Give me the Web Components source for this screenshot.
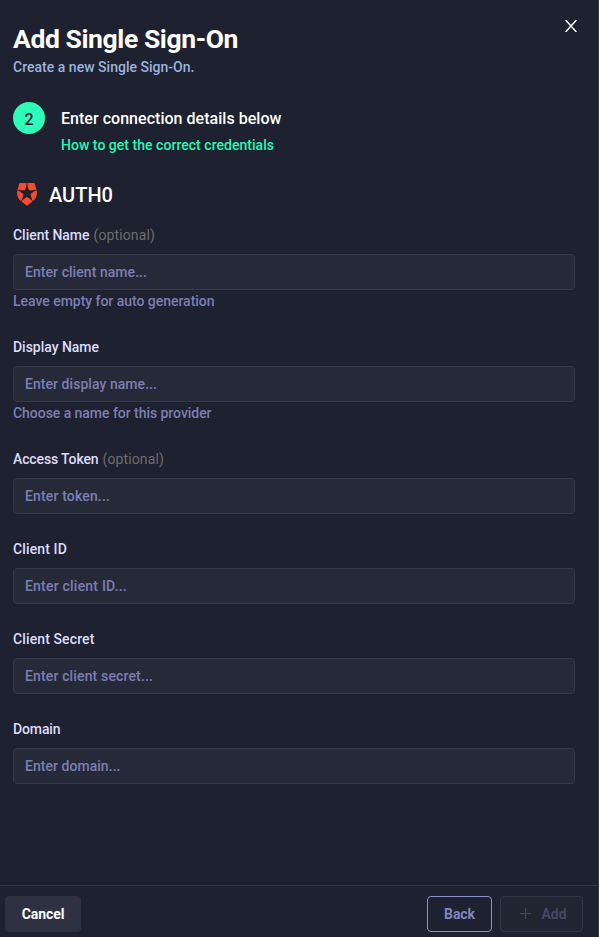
<!DOCTYPE html>
<html lang="en"><head><meta charset="utf-8"><title>Add Single Sign-On</title>
<style>html,body{margin:0;height:100%;background:#1e212f}body{font-family:Roboto,"Liberation Sans",sans-serif;overflow:hidden}</style></head>
<body><sso-panel></sso-panel>
<script>
const define=(name,html,after)=>customElements.define(name,class extends HTMLElement{
  connectedCallback(){
    if(this.shadowRoot)return;
    this.attachShadow({mode:'open'}).innerHTML=typeof html==='function'?html(this):html;
    if(after)after(this);
  }
});
// A single line of text tracked to fill the given width.
define('ui-text',`<style>:host{display:inline-block;white-space:pre}span{display:inline-block}</style><span></span>`,el=>{
  const s=el.shadowRoot.querySelector('span');
  s.textContent=el.getAttribute('text');
  const w=+el.getAttribute('w');
  if(w)s.style.letterSpacing=((w-s.getBoundingClientRect().width)/s.textContent.length).toFixed(3)+'px';
});
define('auth-logo',`<style>:host{display:block;width:20px;height:23px;padding-top:1px}svg{display:block}</style>
<svg width="20" height="23" viewBox="0 0 20 23"><path fill="#f64c2b" d="M2.6 0H17.4L19.5 6.6C20.8 11 19.3 15.9 15.6 18.6L10 22.7 4.4 18.6C.7 15.9-.8 11 .5 6.6Z"/><path fill="#1e212f" d="M10 1.2 12 7.2H18.6L13.4 11.2 15.4 17.7 10 13.8 4.6 17.7 6.6 11.2 1.4 7.2H8Z"/><path stroke="#1e212f" stroke-width=".8" d="M10 0V3M20 7.2H17M0 7.2H3M15 17 16 19M5 17 4 19"/></svg>`);
define('form-field',el=>{const a=n=>el.getAttribute(n);return `<style>
:host{display:block;height:${a('hint')?112:90}px;font-size:14px;line-height:20px;font-weight:500}
.label{display:flex;gap:4px;height:29px;color:#dcdcfb}
.opt{color:#6d6d6d;font-weight:400}
.box{box-sizing:border-box;height:36px;border:1px solid #353847;border-radius:4px;background:#262937;padding:7px 11px;color:#7a7fb4}
.hint{color:#7a7fb4;margin-top:1px}</style>
<div class="label"><ui-text text="${a('label')}" w="${a('lw')}"></ui-text>${a('optional')!==null?'<ui-text class="opt" text="(optional)" w="61.5"></ui-text>':''}</div>
<div class="box"><ui-text text="${a('placeholder')}" w="${a('pw')}"></ui-text></div>
${a('hint')?`<div class="hint"><ui-text text="${a('hint')}" w="${a('hw')}"></ui-text></div>`:''}`});
define('ui-button',`<style>:host{display:flex;box-sizing:border-box;height:36px;border-radius:4px;align-items:center;justify-content:center;border:1px solid transparent;font-size:14px;font-weight:700;line-height:20px}
:host([kind=cancel]){width:76px;background:#2e3141;color:#fff}
:host([kind=back]){width:65px;border-color:#8a8fc8;color:#8186bd}
:host([kind=add]){width:83px;border-color:#333645;background:#212431;color:#464867;gap:10px;padding-left:3px}</style><slot></slot>`);
define('panel-header',`<style>:host{display:flex;justify-content:space-between;height:102px;padding:0 21px 0 13px;box-sizing:border-box}
h1{margin:23px 0 0;font-size:26.5px;line-height:32px;font-weight:700;color:#fff}
p{margin:2px 0 0;font-size:14px;line-height:20px;font-weight:500;color:#9bb4de}
svg{display:block;margin-top:20px}</style>
<div><h1><ui-text text="Add Single Sign-On" w="225"></ui-text></h1><p><ui-text text="Create a new Single Sign-On." w="181.5"></ui-text></p></div>
<svg width="12" height="12" viewBox="0 0 12 12" fill="none" stroke="#fff" stroke-width="1.4"><path d="M.6 0 11.4 12M11.4 0 .6 12"/></svg>`);
define('step-head',`<style>:host{display:flex;gap:16px;height:80px}
.n{box-sizing:border-box;width:32px;height:32px;padding-top:2px;border-radius:50%;background:#2dfdb8;color:#1e212f;font-size:16px;font-weight:500;line-height:32px;text-align:center}
.t{font-size:16px;line-height:24px;color:#fff;font-weight:500;margin-top:5px}
.l{font-size:14px;line-height:20px;color:#2df5b3;font-weight:500;margin-top:4px}</style>
<div class="n">2</div><div><div class="t"><ui-text text="Enter connection details below" w="220.5"></ui-text></div><div class="l"><ui-text text="How to get the correct credentials" w="213"></ui-text></div></div>`);
define('panel-footer',`<style>:host{display:flex;box-sizing:border-box;height:52px;border-top:1px solid #303342;padding:10px 15px 0 5px;gap:8px}.sp{flex:1}</style>
<ui-button kind="cancel"><ui-text text="Cancel" w="42.5"></ui-text></ui-button><div class="sp"></div>
<ui-button kind="back"><ui-text text="Back" w="31"></ui-text></ui-button>
<ui-button kind="add"><svg width="12" height="12" viewBox="0 0 12 12" stroke="#464867"><path d="M5.5 0V11M0 5.5H11"/></svg><ui-text text="Add" w="25"></ui-text></ui-button>`);
define('sso-panel',`<style>:host{display:flex;flex-direction:column;box-sizing:border-box;width:599px;height:937px;background:#1e212f;border-right:1px solid #303342}
main{flex:1;padding:0 23px 0 13px}
.prov{display:flex;gap:8px;height:43px;font-size:20px;line-height:26px;font-weight:500;color:#fff}
auth-logo{margin-left:4px}ui-text{flex:none}</style>
<panel-header></panel-header><main><step-head></step-head>
<div class="prov"><auth-logo></auth-logo><ui-text style="margin-left:4px" text="AUTH0" w="64"></ui-text></div>
<form-field label="Client Name" lw="76.5" optional placeholder="Enter client name..." pw="122" hint="Leave empty for auto generation" hw="201.5"></form-field>
<form-field label="Display Name" lw="86" placeholder="Enter display name..." pw="132" hint="Choose a name for this provider" hw="198.5"></form-field>
<form-field label="Access Token" lw="85.5" optional placeholder="Enter token..." pw="85"></form-field>
<form-field label="Client ID" lw="54" placeholder="Enter client ID..." pw="102"></form-field>
<form-field label="Client Secret" lw="81.5" placeholder="Enter client secret..." pw="128"></form-field>
<form-field label="Domain" lw="47.5" placeholder="Enter domain..." pw="95.5"></form-field>
</main><panel-footer></panel-footer>`);
</script></body></html>
